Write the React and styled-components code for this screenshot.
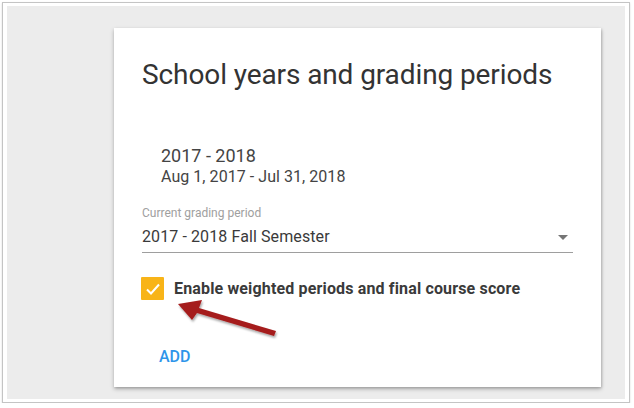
import React from 'react';
import styled, { createGlobalStyle } from 'styled-components';

const GlobalStyle = createGlobalStyle`
    html, body {
        margin: 0;
        padding: 0;
        background: #ffffff;
    }
    body {
        font-family: Roboto, "Liberation Sans", Arial, sans-serif;
    }
`;

const Frame = styled.div`
    margin: 2px 0 0 2px;
    width: 628px;
    height: 401px;
    box-sizing: border-box;
    border: 1px solid #c4c4c4;
    box-shadow: 0 1px 2px rgba(0, 0, 0, 0.15);
    padding: 3px 4px 3px 4px;
    background: #ffffff;
`;

const Backdrop = styled.div`
    height: 100%;
    background: #ececec;
    padding: 22px 0 0 107px;
    box-sizing: border-box;
`;

const Card = styled.div`
    position: relative;
    width: 487px;
    height: 359px;
    box-sizing: border-box;
    background: #ffffff;
    box-shadow: 0 2px 4px rgba(0, 0, 0, 0.28), 1px 1px 2px rgba(0, 0, 0, 0.12);
    padding: 29px 28px 0 28px;
`;

const Title = styled.h1`
    margin: 0;
    font-size: 28px;
    line-height: 36px;
    font-weight: 400;
    color: #333333;
    letter-spacing: -0.1px;
`;

const YearBlock = styled.div`
    margin: 52px 0 0 19px;
    color: #444444;
`;

const YearName = styled.div`
    font-size: 18px;
    line-height: 22px;
`;

const YearDates = styled.div`
    font-size: 16px;
    line-height: 19px;
    letter-spacing: 0.05px;
`;

const Field = styled.div`
    margin-top: 19px;
    width: 431px;
`;

const FieldLabel = styled.div`
    font-size: 12px;
    line-height: 16px;
    color: #a0a0a0;
`;

const Select = styled.div`
    display: flex;
    align-items: center;
    justify-content: space-between;
    margin-top: 6px;
    padding-bottom: 5px;
    border-bottom: 1px solid #9e9e9e;
    font-size: 16px;
    line-height: 20px;
    letter-spacing: 0.1px;
    color: #3a3a3a;
`;

const Caret = styled.span`
    width: 0;
    height: 0;
    margin-right: 5px;
    border-left: 5px solid transparent;
    border-right: 5px solid transparent;
    border-top: 5px solid #757575;
`;

const CheckRow = styled.label`
    display: flex;
    align-items: center;
    gap: 10px;
    margin: 24px 0 0 -1px;
`;

const Box = styled.span`
    display: flex;
    align-items: center;
    justify-content: center;
    width: 23px;
    height: 23px;
    background: #f8b418;
    border-radius: 1px;
`;

const CheckLabel = styled.span`
    font-size: 16px;
    font-weight: 700;
    letter-spacing: 0.15px;
    color: #3a3a3a;
`;

const AddButton = styled.button`
    margin: 47px 0 0 17px;
    padding: 0;
    border: none;
    background: none;
    font-family: inherit;
    font-size: 16px;
    font-weight: 500;
    color: #2e95ea;
    cursor: pointer;
`;

const Pointer = styled.svg`
    position: absolute;
    left: 60px;
    top: 270px;
    overflow: visible;
`;

const App = () => (
    <>
        <GlobalStyle />
        <Frame>
            <Backdrop>
                <Card>
                    <Title>School years and grading periods</Title>
                    <YearBlock>
                        <YearName>2017 - 2018</YearName>
                        <YearDates>Aug 1, 2017 - Jul 31, 2018</YearDates>
                    </YearBlock>
                    <Field>
                        <FieldLabel>Current grading period</FieldLabel>
                        <Select>
                            <span>2017 - 2018 Fall Semester</span>
                            <Caret />
                        </Select>
                    </Field>
                    <CheckRow>
                        <Box>
                            <svg width="16" height="14" viewBox="0 0 16 14">
                                <path d="M2 7.5 L6 11.5 L14 2.5" fill="none" stroke="#ffffff" strokeWidth="2" />
                            </svg>
                        </Box>
                        <CheckLabel>Enable weighted periods and final course score</CheckLabel>
                    </CheckRow>
                    <AddButton>ADD</AddButton>
                    {/* red callout arrow pointing at the checkbox */}
                    <Pointer width="110" height="50" viewBox="0 0 110 50">
                        <defs>
                            <filter id="sh" x="-20%" y="-40%" width="140%" height="180%">
                                <feDropShadow dx="1" dy="2" stdDeviation="1.2" floodColor="#000" floodOpacity="0.35" />
                            </filter>
                        </defs>
                        <polygon
                            points="4,6 28,2 25,10 102,33 100,38 23,15 18,22"
                            fill="#a51c1c"
                            filter="url(#sh)"
                        />
                    </Pointer>
                </Card>
            </Backdrop>
        </Frame>
    </>
);

export default App;
